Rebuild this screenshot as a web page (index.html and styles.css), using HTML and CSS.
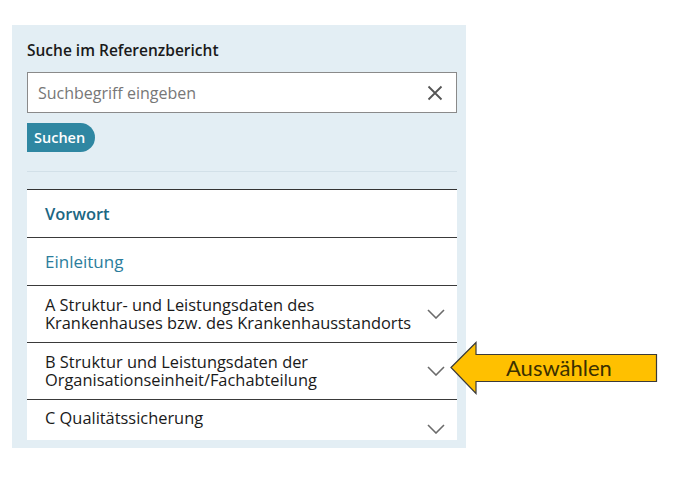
FILE: index.html
```html
<!DOCTYPE html>
<html lang="de">
<head>
  <meta charset="UTF-8">
  <title>Suche im Referenzbericht</title>
  <link rel="stylesheet" href="styles.css">
</head>
<body>
  <div class="panel">
    <h2 class="panel-title">Suche im Referenzbericht</h2>
    <div class="search-field">
      <input type="text" class="search-input" placeholder="Suchbegriff eingeben">
      <button class="clear-btn" aria-label="Eingabe löschen">
        <svg width="16" height="16" viewBox="0 0 16 16"><path d="M1.5 1.5 L14.5 14.5 M14.5 1.5 L1.5 14.5" stroke="#555" stroke-width="1.8" fill="none"/></svg>
      </button>
    </div>
    <button class="search-btn">Suchen</button>
    <hr class="divider">
    <div class="toc">
      <div class="toc-row"><span class="toc-title link strong">Vorwort</span></div>
      <div class="toc-row"><span class="toc-title link">Einleitung</span></div>
      <div class="toc-row tall">
        <span class="toc-title"><span class="line">A Struktur- und Leistungsdaten des</span><span class="line">Krankenhauses bzw. des Krankenhausstandorts</span></span>
        <svg class="chevron" width="18" height="10" viewBox="0 0 18 10"><path d="M1 1 L9 9 L17 1" stroke="#6b6b6b" stroke-width="1.6" fill="none"/></svg>
      </div>
      <div class="toc-row tall">
        <span class="toc-title"><span class="line">B Struktur und Leistungsdaten der</span><span class="line">Organisationseinheit/Fachabteilung</span></span>
        <svg class="chevron" width="18" height="10" viewBox="0 0 18 10"><path d="M1 1 L9 9 L17 1" stroke="#6b6b6b" stroke-width="1.6" fill="none"/></svg>
      </div>
      <div class="toc-row tall last">
        <span class="toc-title"><span class="line">C Qualitätssicherung</span></span>
        <svg class="chevron" width="18" height="10" viewBox="0 0 18 10"><path d="M1 1 L9 9 L17 1" stroke="#6b6b6b" stroke-width="1.6" fill="none"/></svg>
      </div>
    </div>
  </div>

  <!-- Hinweis-Pfeil -->
  <div class="callout">
    <svg width="210" height="55" viewBox="0 0 210 55"><polygon points="1,26.5 26,1.5 26,13.5 206.5,13.5 206.5,40.5 26,40.5 26,52.5" fill="#ffc000" stroke="#3a3a3a" stroke-width="1.2"/></svg>
    <span class="callout-text">Auswählen</span>
  </div>
</body>
</html>
```

FILE: styles.css
```css
body { margin:0; font-family:'Open Sans', 'Noto Sans', sans-serif; background:#fff; color:#1a1a1a; }
.panel { width:430px; margin:25px 0 0 12px; padding:14px 9px 8px 15px; background:#e3eef4; }
.panel-title { margin:0; font-size:15.5px; line-height:22px; font-weight:600; color:#1a1a1a; }
.search-field { display:flex; align-items:center; height:41px; box-sizing:border-box; margin-top:11px; background:#fff; border:1px solid #8a8a8a; }
.search-input { flex:1; border:none; outline:none; padding:0 10px; font-family:inherit; font-size:16px; color:#333; background:transparent; }
.search-input::placeholder { color:#777; }
.clear-btn { display:flex; border:none; background:none; padding:0; margin-right:13px; cursor:pointer; }
.search-btn { display:block; margin-top:10px; height:29px; padding:0 10px 0 7px; border:none; border-radius:0 15px 15px 0; background:#2f87a2; color:#fff; font-family:inherit; font-size:14.5px; font-weight:600; cursor:pointer; }
.divider { margin:19px 0 0 0; border:none; border-top:1px solid #d2e0e8; }
.toc { margin-top:17px; height:251px; box-sizing:border-box; overflow:hidden; background:#fff; border-top:1px solid #333; }
.toc-row { display:flex; align-items:center; justify-content:space-between; height:48px; box-sizing:border-box; padding:0 12px 0 18px; border-bottom:1px solid #3a3a3a; }
.toc-row.tall { height:57px; }
.toc-row.last { border-bottom:none; }
.toc-row.last .toc-title { align-self:flex-start; padding-top:9px; }
.toc-title { font-size:16.4px; }
.toc-title .line { display:block; height:18px; line-height:18px; }
.toc-title.link { font-size:17px; line-height:24px; color:#2b7d9c; }
.toc-title.strong { font-size:16.5px; font-weight:600; color:#1c6783; }
.chevron { flex:none; }
.callout { position:absolute; left:450px; top:341px; width:210px; height:55px; }
.callout svg { display:block; }
.callout-text { position:absolute; left:56px; top:13px; font-family:Lato, 'Liberation Sans', sans-serif; font-size:22px; line-height:28px; color:#3b3000; }
```
